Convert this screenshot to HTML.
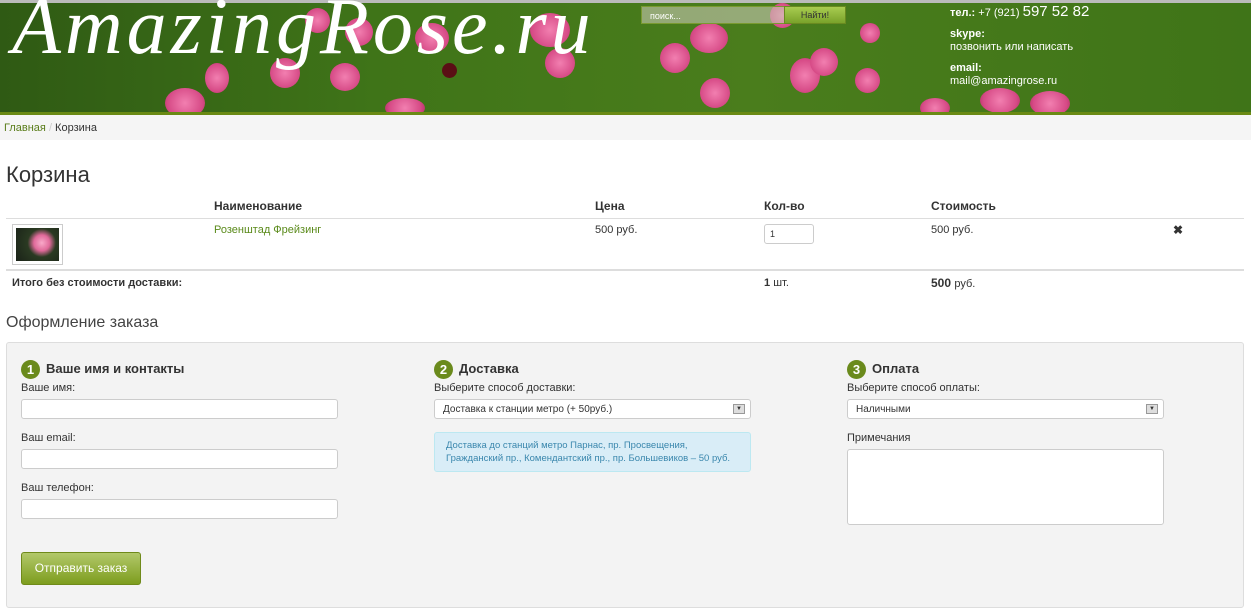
<!DOCTYPE html><html><head><meta charset="utf-8"><style>
*{box-sizing:border-box;margin:0;padding:0}
body{width:1251px;height:615px;overflow:hidden;background:#fff;font-family:"Liberation Sans",sans-serif;font-size:11px;color:#333;position:relative}
.a{position:absolute}
.hdr{left:0;top:0;width:1251px;height:115px;background:linear-gradient(90deg,#2f5a14,#3f7418 30%,#4a7d1c 60%,#3f7418);border-top:3px solid #bbb;border-bottom:3px solid #6a8a14;overflow:hidden}
.r{position:absolute;border-radius:50%;background:radial-gradient(circle,#f27fb0,#d64a86 70%,#b03060)}
.logo{left:12px;top:-18px;font-family:"Liberation Serif",serif;font-style:italic;font-weight:normal;font-size:80px;color:#fff;letter-spacing:4px;white-space:nowrap}
.inp{border:1px solid #ccc;border-radius:3px;background:#fff;height:20px}
.th{top:199px;font-weight:bold;font-size:12px;color:#333}
.lbl{font-size:11px;color:#333}
.num{display:inline-block;width:19px;height:19px;border-radius:50%;background:#6a8a1c;color:#fff;text-align:center;line-height:19px;font-weight:bold;font-size:13px;margin-right:6px;vertical-align:middle}
.h3{font-weight:bold;font-size:13px;color:#333}
.sel{border:1px solid #ccc;border-radius:3px;background:#fff;height:20px;font-size:10px;padding:4px 8px}
.arr{position:absolute;right:5px;top:4px;width:12px;height:10px;background:#ddd;border:1px solid #999;font-size:6px;text-align:center;line-height:9px}
</style></head><body>
<div class="a hdr">
<div class="r" style="left:165px;top:85px;width:40px;height:30px"></div>
<div class="r" style="left:205px;top:60px;width:24px;height:30px"></div>
<div class="r" style="left:270px;top:55px;width:30px;height:30px"></div>
<div class="r" style="left:305px;top:5px;width:25px;height:25px"></div>
<div class="r" style="left:330px;top:60px;width:30px;height:28px"></div>
<div class="r" style="left:345px;top:15px;width:28px;height:28px"></div>
<div class="r" style="left:385px;top:95px;width:40px;height:20px"></div>
<div class="r" style="left:415px;top:20px;width:34px;height:30px"></div>
<div class="r" style="left:442px;top:60px;width:15px;height:15px;background:#5a0f15"></div>
<div class="r" style="left:530px;top:10px;width:40px;height:34px"></div>
<div class="r" style="left:545px;top:45px;width:30px;height:30px"></div>
<div class="r" style="left:660px;top:40px;width:30px;height:30px"></div>
<div class="r" style="left:690px;top:20px;width:38px;height:30px"></div>
<div class="r" style="left:700px;top:75px;width:30px;height:30px"></div>
<div class="r" style="left:770px;top:0px;width:25px;height:25px"></div>
<div class="r" style="left:790px;top:55px;width:30px;height:35px"></div>
<div class="r" style="left:810px;top:45px;width:28px;height:28px"></div>
<div class="r" style="left:855px;top:65px;width:25px;height:25px"></div>
<div class="r" style="left:860px;top:20px;width:20px;height:20px"></div>
<div class="r" style="left:980px;top:85px;width:40px;height:25px"></div>
<div class="r" style="left:1030px;top:88px;width:40px;height:25px"></div>
<div class="r" style="left:920px;top:95px;width:30px;height:20px"></div>
</div>
<div class="a logo">AmazingRose.ru</div>
<div class="a" style="left:641px;top:6px;width:145px;height:18px;background:rgba(200,200,180,.6);border:1px solid #7a9a30;color:#fff;font-size:9px;padding:4px 8px">поиск...</div>
<div class="a" style="left:784px;top:6px;width:62px;height:18px;background:linear-gradient(#a8cc50,#7aa22a);border:1px solid #6a8a20;font-size:9px;text-align:center;line-height:16px;color:#333">Найти!</div>
<div class="a" style="left:950px;top:5px;color:#fff;font-size:11px;line-height:13px">
<div><b>тел.:</b> +7 (921) <span style="font-size:15px">597 52 82</span></div>
<div style="margin-top:8px"><b>skype:</b><br>позвонить или написать</div>
<div style="margin-top:8px"><b>email:</b><br>mail@amazingrose.ru</div>
</div>
<div class="a" style="left:0;top:115px;width:1251px;height:25px;background:#f5f5f5;padding:7px 4px;font-size:11px"><span style="color:#5a7d1a">Главная</span> <span style="color:#ccc">/</span> Корзина</div>
<div class="a" style="left:6px;top:162px;font-size:22px;color:#333;font-weight:300">Корзина</div>
<div class="a th" style="left:214px">Наименование</div>
<div class="a th" style="left:595px">Цена</div>
<div class="a th" style="left:764px">Кол-во</div>
<div class="a th" style="left:931px">Стоимость</div>
<div class="a" style="left:6px;top:218px;width:1238px;height:1px;background:#ddd"></div>
<div class="a" style="left:12px;top:224px;width:51px;height:41px;border:1px solid #ccc;padding:3px"><div style="width:100%;height:100%;background:radial-gradient(circle at 60% 45%,#f9a9c9 0,#e06a9a 25%,#2a3a22 45%,#1a2218)"></div></div>
<div class="a" style="left:214px;top:224px;color:#5a8a1a;font-size:11px">Розенштад Фрейзинг</div>
<div class="a" style="left:595px;top:224px">500 руб.</div>
<div class="a inp" style="left:764px;top:224px;width:50px;font-size:9px;padding:4px 5px">1</div>
<div class="a" style="left:931px;top:224px">500 руб.</div>
<div class="a" style="left:1173px;top:223px;font-size:12px;font-weight:bold">✖</div>
<div class="a" style="left:6px;top:269px;width:1238px;height:2px;background:#ddd"></div>
<div class="a" style="left:12px;top:277px;font-weight:bold;font-size:11px">Итого без стоимости доставки:</div>
<div class="a" style="left:764px;top:277px;font-weight:bold">1 <span style="font-weight:normal">шт.</span></div>
<div class="a" style="left:931px;top:276px;font-weight:bold;font-size:12px">500 <span style="font-weight:normal;font-size:11px">руб.</span></div>
<div class="a" style="left:6px;top:314px;font-size:16px;color:#444;font-weight:300">Оформление заказа</div>
<div class="a" style="left:6px;top:342px;width:1238px;height:266px;background:#f3f3f3;border:1px solid #ddd;border-radius:3px"></div>
<div class="a h3" style="left:21px;top:360px"><span class="num">1</span>Ваше имя и контакты</div>
<div class="a lbl" style="left:21px;top:382px">Ваше имя:</div>
<div class="a inp" style="left:21px;top:399px;width:317px"></div>
<div class="a lbl" style="left:21px;top:432px">Ваш email:</div>
<div class="a inp" style="left:21px;top:449px;width:317px"></div>
<div class="a lbl" style="left:21px;top:482px">Ваш телефон:</div>
<div class="a inp" style="left:21px;top:499px;width:317px"></div>
<div class="a" style="left:21px;top:552px;width:120px;height:33px;border-radius:3px;background:linear-gradient(#b2c86a,#7d9d1e);border:1px solid #6f8a1a;color:#fff;font-size:12px;text-align:center;line-height:31px">Отправить заказ</div>
<div class="a h3" style="left:434px;top:360px"><span class="num">2</span>Доставка</div>
<div class="a lbl" style="left:434px;top:382px">Выберите способ доставки:</div>
<div class="a sel" style="left:434px;top:399px;width:317px">Доставка к станции метро (+ 50руб.)<span class="arr">▼</span></div>
<div class="a" style="left:434px;top:432px;width:317px;height:40px;background:#d9edf7;border:1px solid #bce8f1;border-radius:3px;color:#3a87ad;font-size:9.5px;line-height:13px;padding:6px 11px">Доставка до станций метро Парнас, пр. Просвещения, Гражданский пр., Комендантский пр., пр. Большевиков – 50 руб.</div>
<div class="a h3" style="left:847px;top:360px"><span class="num">3</span>Оплата</div>
<div class="a lbl" style="left:847px;top:382px">Выберите способ оплаты:</div>
<div class="a sel" style="left:847px;top:399px;width:317px">Наличными<span class="arr">▼</span></div>
<div class="a lbl" style="left:847px;top:432px">Примечания</div>
<div class="a inp" style="left:847px;top:449px;width:317px;height:76px"></div>
</body></html>
